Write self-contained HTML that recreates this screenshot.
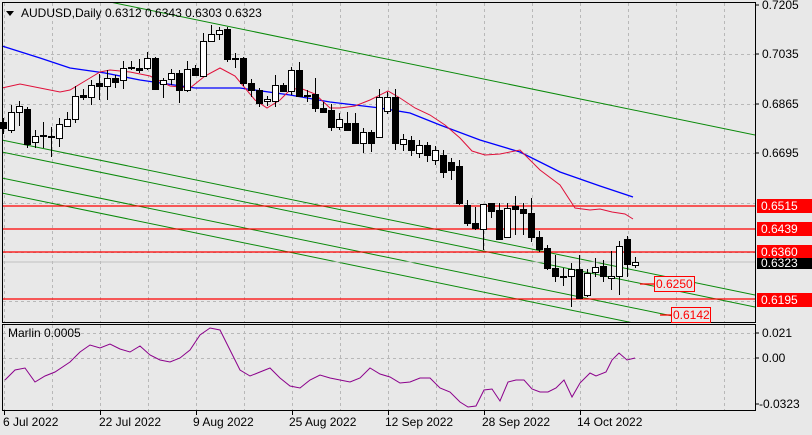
<!DOCTYPE html>
<html><head><meta charset="utf-8"><style>
html,body{margin:0;padding:0;background:#e8e8e8;}
svg{display:block;font-family:"Liberation Sans",sans-serif;}
</style></head><body>
<svg id="s" width="812" height="435" viewBox="0 0 812 435" xmlns="http://www.w3.org/2000/svg">
<defs><clipPath id="mc"><rect x="3" y="3" width="752" height="319"/></clipPath></defs>
<rect x="0" y="0" width="812" height="435" fill="#e8e8e8"/>
<g id="grid" stroke="#b8b8b8" stroke-dasharray="3,3" stroke-width="1"></g>
<g stroke="#0a8a0a" stroke-width="1" fill="none" clip-path="url(#mc)">
<line x1="110" y1="2" x2="755" y2="135"/>
<line x1="2" y1="140" x2="755" y2="295"/>
<line x1="2" y1="152" x2="755" y2="307"/>
<line x1="2" y1="178" x2="755" y2="333"/>
<line x1="2" y1="193" x2="755" y2="348"/>
</g>
<line x1="2" y1="262" x2="755" y2="262" stroke="#c0c0c0"/>
<g stroke="#ff0000" stroke-width="1.3">
<line x1="2" y1="206" x2="755" y2="206"/>
<line x1="2" y1="229" x2="755" y2="229"/>
<line x1="2" y1="252" x2="755" y2="252"/>
<line x1="2" y1="299" x2="755" y2="299"/>
<line x1="640" y1="284" x2="654" y2="284"/>
<line x1="660" y1="315" x2="671" y2="315"/>
</g>
<polyline fill="none" stroke="#0000ff" stroke-width="1.3" points="2,46 40,58 70,68 105,73 140,80 195,88 240,88 290,95 330,102 380,108 410,113 440,125 480,140 520,152 560,172 600,186 633,197"/>
<polyline fill="none" stroke="#e0103a" stroke-width="1" points="2,88 20,84 40,88 60,92 70,90 90,78 100,72 110,70 130,72 150,76 170,86 190,88 205,76 220,68 235,76 245,88 255,100 267,108 280,100 290,90 300,88 315,94 330,108 340,108 355,106 370,100 388,91 400,98 415,108 430,115 445,125 460,138 472,151 485,155 500,154 520,150 540,170 560,185 575,208 590,210 600,209 612,212 625,214 633,219"/>
<g id="candles"></g>
<rect x="2.5" y="2.5" width="753" height="320" fill="none" stroke="#000"/>
<rect x="2.5" y="324.5" width="753" height="86" fill="none" stroke="#000"/>
<polyline fill="none" stroke="#8b008b" stroke-width="1" points="5,380 15,370 25,368 35,382 45,376 55,372 70,362 80,352 90,345 100,348 110,344 120,349 130,352 140,346 150,355 160,360 170,362 180,358 190,350 200,335 210,328 220,330 230,350 240,370 250,376 260,372 270,368 280,378 290,386 300,388 310,380 320,375 330,378 340,380 350,382 360,378 370,368 380,374 390,377 400,383 410,382 420,378 430,378 440,388 450,392 460,402 468,407 476,406 484,390 492,389 500,401 508,382 516,380 524,380 532,389 540,392 548,392 556,388 564,380 572,397 580,383 590,373 596,376 606,372 612,360 619,353 627,360 635,358"/>
<polygon points="6,11 14,11 10,16" fill="#000"/>
<text x="21" y="17" font-size="12" fill="#000">AUDUSD,Daily  0.6312 0.6343 0.6303 0.6323</text>
<text x="8" y="337" font-size="12" fill="#000">Marlin 0.0005</text>
<g font-size="12" fill="#000">
<text x="762" y="9">0.7205</text>
<text x="762" y="58">0.7035</text>
<text x="762" y="108">0.6865</text>
<text x="762" y="157">0.6695</text>
<text x="762" y="337">0.021</text>
<text x="762" y="362">0.00</text>
<text x="759" y="408">-0.0323</text>
</g>
<g stroke="#000"><line x1="755" y1="5" x2="759" y2="5"/><line x1="755" y1="54" x2="759" y2="54"/><line x1="755" y1="104" x2="759" y2="104"/><line x1="755" y1="153" x2="759" y2="153"/><line x1="755" y1="333" x2="759" y2="333"/><line x1="755" y1="358" x2="759" y2="358"/><line x1="755" y1="404" x2="759" y2="404"/></g>
<g font-size="12" fill="#fff">
<rect x="757" y="199" width="55" height="14" fill="#ff0000"/><text x="761" y="210">0.6515</text>
<rect x="757" y="222" width="55" height="14" fill="#ff0000"/><text x="761" y="233">0.6439</text>
<rect x="757" y="245" width="55" height="13" fill="#ff0000"/><text x="761" y="256">0.6360</text>
<rect x="757" y="258" width="55" height="11" fill="#000"/><text x="761" y="267">0.6323</text>
<rect x="757" y="293" width="55" height="14" fill="#ff0000"/><text x="761" y="304">0.6195</text>
</g>
<rect x="654.5" y="276.5" width="40" height="15" fill="#e8e8e8" stroke="#ff0000"/>
<text x="656" y="288" font-size="12" fill="#ff0000">0.6250</text>
<rect x="671.5" y="307.5" width="39" height="15" fill="#e8e8e8" stroke="#ff0000"/>
<text x="673" y="319" font-size="12" fill="#ff0000">0.6142</text>
<g font-size="12" fill="#000">
<text x="3" y="426">6 Jul 2022</text>
<text x="99" y="426">22 Jul 2022</text>
<text x="193" y="426">9 Aug 2022</text>
<text x="289" y="426">25 Aug 2022</text>
<text x="385" y="426">12 Sep 2022</text>
<text x="482" y="426">28 Sep 2022</text>
<text x="577" y="426">14 Oct 2022</text>
</g>
<g stroke="#000" id="ticks"></g>
</svg>
<script>
var NS="http://www.w3.org/2000/svg";
function el(p,t,a){var e=document.createElementNS(NS,t);for(var k in a)e.setAttribute(k,a[k]);p.appendChild(e);return e;}
var g=document.getElementById('grid');
[4,52,100,148,196,244,292,340,388,436,484,532,580,628,676,724].forEach(function(x){
 el(g,'line',{x1:x+.5,y1:3,x2:x+.5,y2:322});el(g,'line',{x1:x+.5,y1:325,x2:x+.5,y2:410});});
[54,104,153,203,252,301].forEach(function(y){el(g,'line',{x1:3,y1:y+.5,x2:755,y2:y+.5});});
[333,358].forEach(function(y){el(g,'line',{x1:3,y1:y+.5,x2:755,y2:y+.5});});
var tk=document.getElementById('ticks');
[4,100,196,292,388,484,580].forEach(function(x){el(tk,'line',{x1:x+.5,y1:410,x2:x+.5,y2:415});});
var C=[[3,122,128,118,134],[11,130,112,105,133],[19,112,106,101,126],[27,109,144,107,148],[35,142,136,130,148],[43,135,135,122,148],[51,136,137,127,157],[59,138,124,118,147],[67,126,119,112,127],[75,119,96,86,123],[83,95,97,89,100],[91,97,85,80,105],[99,83,86,74,100],[107,86,78,70,100],[115,78,82,75,88],[123,80,68,61,89],[131,67,68,61,70],[139,68,70,59,73],[147,68,58,52,70],[155,58,89,57,90],[163,84,80,78,98],[171,79,73,69,85],[179,73,90,70,103],[187,90,69,61,92],[195,68,75,65,76],[203,76,41,33,76],[211,41,34,25,41],[219,34,30,27,40],[227,29,59,27,62],[235,58,58,53,68],[243,58,83,57,86],[251,83,90,79,97],[259,90,103,88,107],[267,101,99,96,106],[275,101,85,75,107],[283,85,91,83,92],[291,91,70,67,95],[299,70,96,62,97],[307,95,95,90,102],[315,94,108,78,112],[323,108,112,102,113],[331,110,127,104,131],[339,127,119,113,130],[347,123,130,112,131],[355,123,143,113,144],[363,143,132,128,153],[371,132,143,130,152],[379,137,97,89,138],[387,111,97,92,114],[395,97,143,89,150],[403,144,139,134,151],[411,140,150,136,156],[419,153,145,140,158],[427,145,155,142,162],[435,160,150,146,165],[443,155,172,150,178],[451,162,170,158,180],[459,166,203,160,205],[467,205,223,200,226],[475,223,228,207,230],[483,229,204,204,250],[491,203,211,203,218],[499,210,239,203,240],[507,237,208,203,238],[515,206,209,196,235],[523,209,213,203,235],[531,213,237,198,242],[539,237,249,231,252],[547,248,268,245,270],[555,268,276,255,282],[563,276,276,268,286],[571,276,269,263,307],[579,269,298,255,299],[587,295,273,269,297],[595,272,267,258,277],[603,266,276,260,282],[611,278,276,251,290],[619,276,246,241,295],[627,239,264,236,277],[635,265,262,257,268]];
var cg=document.getElementById('candles');
C.forEach(function(c){var x=c[0],o=c[1],cl=c[2],h=c[3],l=c[4];
 el(cg,'line',{x1:x+.5,y1:h,x2:x+.5,y2:l,stroke:'#000'});
 var t=Math.min(o,cl),b=Math.max(o,cl);if(b-t<1)b=t+1;
 el(cg,'rect',{x:x-2.5,y:t+.5,width:6,height:b-t,fill:cl<o?'#fff':'#000',stroke:'#000'});});
</script>
</body></html>
